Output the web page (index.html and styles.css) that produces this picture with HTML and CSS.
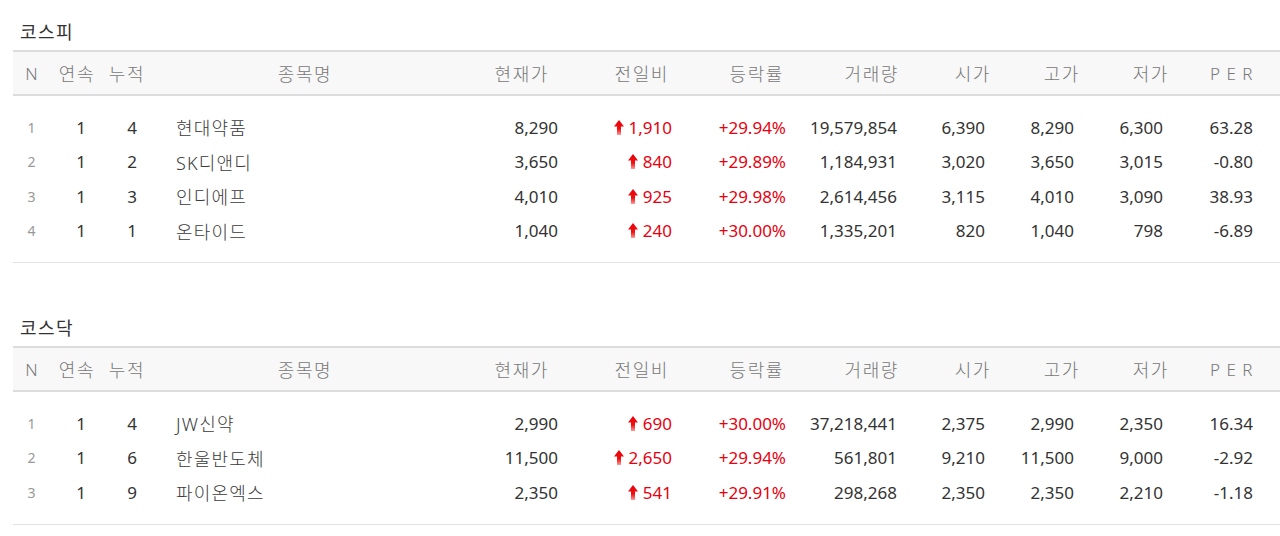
FILE: index.html
```html
<!DOCTYPE html>
<html lang="ko">
<head>
<meta charset="utf-8">
<title>상한가</title>
<link rel="stylesheet" href="styles.css">
</head>
<body>
<svg width="0" height="0" class="defs" aria-hidden="true">
  <defs>
    <linearGradient id="upgrad" x1="0" y1="0" x2="0" y2="1">
      <stop offset="0" stop-color="#e8000b"/>
      <stop offset="0.6" stop-color="#f01010"/>
      <stop offset="1" stop-color="#ff9a9a"/>
    </linearGradient>
    <symbol id="up" viewBox="0 0 10 15">
      <polygon points="5,0 10,6.5 7,6.5 7,15 3,15 3,6.5 0,6.5" fill="url(#upgrad)"/>
    </symbol>
  </defs>
</svg>

<section class="market">
  <h2 class="title">코스피</h2>
  <div class="grid head">
    <div class="c n">N</div><div class="c">연속</div><div class="c">누적</div><div class="c">종목명</div>
    <div class="h h-price">현재가</div><div class="h h-diff">전일비</div><div class="h h-rate">등락률</div><div class="h h-vol">거래량</div>
    <div class="h h-open">시가</div><div class="h h-high">고가</div><div class="h h-low">저가</div><div class="h h-per per">PER</div><div></div>
  </div>
  <div class="body">
    <div class="grid row"><div class="c no">1</div><div class="c d1">1</div><div class="c d2">4</div><div class="name">현대약품</div><div class="r">8,290</div><div class="r up"><svg class="arrow"><use href="#up"/></svg>1,910</div><div class="r up">+29.94%</div><div class="r">19,579,854</div><div class="r">6,390</div><div class="r">8,290</div><div class="r">6,300</div><div class="r">63.28</div><div></div></div>
    <div class="grid row"><div class="c no">2</div><div class="c d1">1</div><div class="c d2">2</div><div class="name">SK디앤디</div><div class="r">3,650</div><div class="r up"><svg class="arrow"><use href="#up"/></svg>840</div><div class="r up">+29.89%</div><div class="r">1,184,931</div><div class="r">3,020</div><div class="r">3,650</div><div class="r">3,015</div><div class="r">-0.80</div><div></div></div>
    <div class="grid row"><div class="c no">3</div><div class="c d1">1</div><div class="c d2">3</div><div class="name">인디에프</div><div class="r">4,010</div><div class="r up"><svg class="arrow"><use href="#up"/></svg>925</div><div class="r up">+29.98%</div><div class="r">2,614,456</div><div class="r">3,115</div><div class="r">4,010</div><div class="r">3,090</div><div class="r">38.93</div><div></div></div>
    <div class="grid row"><div class="c no">4</div><div class="c d1">1</div><div class="c d2">1</div><div class="name">온타이드</div><div class="r">1,040</div><div class="r up"><svg class="arrow"><use href="#up"/></svg>240</div><div class="r up">+30.00%</div><div class="r">1,335,201</div><div class="r">820</div><div class="r">1,040</div><div class="r">798</div><div class="r">-6.89</div><div></div></div>
  </div>
</section>

<section class="market">
  <h2 class="title">코스닥</h2>
  <div class="grid head">
    <div class="c n">N</div><div class="c">연속</div><div class="c">누적</div><div class="c">종목명</div>
    <div class="h h-price">현재가</div><div class="h h-diff">전일비</div><div class="h h-rate">등락률</div><div class="h h-vol">거래량</div>
    <div class="h h-open">시가</div><div class="h h-high">고가</div><div class="h h-low">저가</div><div class="h h-per per">PER</div><div></div>
  </div>
  <div class="body">
    <div class="grid row"><div class="c no">1</div><div class="c d1">1</div><div class="c d2">4</div><div class="name">JW신약</div><div class="r">2,990</div><div class="r up"><svg class="arrow"><use href="#up"/></svg>690</div><div class="r up">+30.00%</div><div class="r">37,218,441</div><div class="r">2,375</div><div class="r">2,990</div><div class="r">2,350</div><div class="r">16.34</div><div></div></div>
    <div class="grid row"><div class="c no">2</div><div class="c d1">1</div><div class="c d2">6</div><div class="name">한울반도체</div><div class="r">11,500</div><div class="r up"><svg class="arrow"><use href="#up"/></svg>2,650</div><div class="r up">+29.94%</div><div class="r">561,801</div><div class="r">9,210</div><div class="r">11,500</div><div class="r">9,000</div><div class="r">-2.92</div><div></div></div>
    <div class="grid row"><div class="c no">3</div><div class="c d1">1</div><div class="c d2">9</div><div class="name">파이온엑스</div><div class="r">2,350</div><div class="r up"><svg class="arrow"><use href="#up"/></svg>541</div><div class="r up">+29.91%</div><div class="r">298,268</div><div class="r">2,350</div><div class="r">2,350</div><div class="r">2,210</div><div class="r">-1.18</div><div></div></div>
  </div>
</section>
</body>
</html>
```

FILE: styles.css
```css
html, body {
  margin: 0;
  padding: 0;
  background: #fff;
}

body {
  font-family: "Noto Sans", "Noto Sans CJK KR", sans-serif;
  font-size: 17px;
  color: #333;
  padding-left: 13px;
  overflow: hidden;
}

.defs {
  position: absolute;
  width: 0;
  height: 0;
}

.market {
  margin-bottom: 33px;
}

.title {
  margin: 0;
  padding: 14px 0 0 7px;
  box-sizing: border-box;
  height: 50px;
  line-height: 37px;
  font-size: 18px;
  font-weight: normal;
  letter-spacing: 1.5px;
  color: #333;
}

.grid {
  display: grid;
  grid-template-columns: 37px 54px 46px 310px 104px 114px 114px 111px 88px 89px 89px 90px 1fr;
  align-items: center;
}

.head {
  height: 42px;
  background: #f8f8f8;
  border-top: 2px solid #dcdcdc;
  border-bottom: 2px solid #dcdcdc;
  color: #777;
  font-size: 18px;
  font-weight: 300;
  letter-spacing: 1.6px;
}

.c { text-align: center; }
.h { text-align: right; }

.head .n { letter-spacing: 0; font-size: 17px; }
.h-price { padding-right: 15px; }
.h-diff { padding-right: 9px; }
.h-rate { padding-right: 8px; }
.h-vol { padding-right: 4px; }
.h-open { padding-right: 0; }
.h-high { padding-right: 0; }
.h-low { padding-right: 0; }
.h-per { padding-right: 0; }
.per { letter-spacing: 6.5px; font-size: 17px; }

.body {
  padding: 14px 0;
  border-bottom: 1px solid #e2e2e2;
}

.row {
  height: 34.5px;
}

.no {
  font-size: 14px;
  color: #999;
}

.d1 { padding-left: 8px; }
.d2 { padding-left: 10px; }

.name {
  padding-left: 26px;
  font-size: 18px;
  font-weight: 300;
  letter-spacing: 1.2px;
  color: #3a3a3a;
}

.r {
  text-align: right;
  padding-right: 6px;
  white-space: nowrap;
}

.up {
  color: #e8000f;
}

.arrow {
  width: 10px;
  height: 15px;
  margin-right: 5px;
  vertical-align: -1px;
}
```
